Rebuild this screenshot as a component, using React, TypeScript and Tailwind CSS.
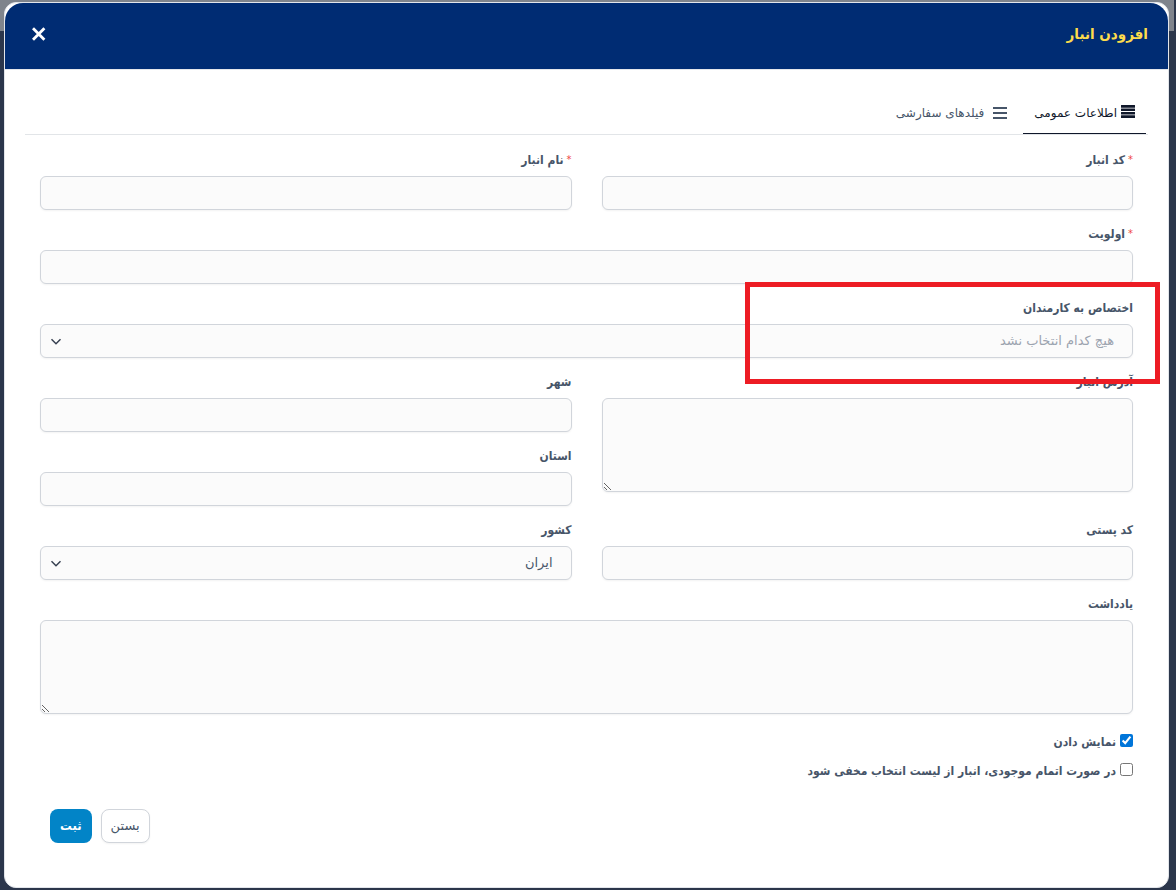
import React, { useState } from "react";

const control =
  "block w-full rounded-md border border-[#d1d5db] bg-[#fbfbfb] px-[18px] text-[13px] text-[#475569] shadow-xs outline-none focus:border-[#0284c7]";

function Label({ id, text, required }: { id: string; text: string; required?: boolean }) {
  return (
    <label
      htmlFor={id}
      className="mb-1.5 flex h-5 items-center gap-[3px] font-['DejaVu_Sans_Condensed','DejaVu_Sans',sans-serif] text-[12px] leading-5 font-bold text-[#475569]"
    >
      {required && <span className="text-[11px] font-normal text-[#ef4444]">*</span>}
      <span>{text}</span>
    </label>
  );
}

function TextField({ id, text, required }: { id: string; text: string; required?: boolean }) {
  return (
    <div>
      <Label id={id} text={text} required={required} />
      <input id={id} type="text" className={control + " h-[34px]"} />
    </div>
  );
}

function AreaField({ id, text }: { id: string; text: string }) {
  return (
    <div>
      <Label id={id} text={text} />
      <textarea id={id} className={control + " h-[94px] resize py-2"} />
    </div>
  );
}

function SelectField({ id, text, value, muted }: { id: string; text: string; value: string; muted?: boolean }) {
  return (
    <div>
      <Label id={id} text={text} />
      <div className="relative">
        <select id={id} className={control + " h-[34px] appearance-none " + (muted ? "text-[#9ca3af]!" : "")}>
          <option>{value}</option>
        </select>
        <svg
          viewBox="0 0 12 8"
          className="pointer-events-none absolute top-[14px] left-[10px] h-2 w-3"
          fill="none"
          stroke="#374151"
          strokeWidth="1.5"
        >
          <path d="M1.5 1.2 L6 5.7 L10.5 1.2" />
        </svg>
      </div>
    </div>
  );
}

function Check({ text, checked }: { text: string; checked?: boolean }) {
  return (
    <label className="flex h-5 items-center gap-1 font-['DejaVu_Sans_Condensed','DejaVu_Sans',sans-serif] text-[12px] font-bold text-[#475569]">
      <input type="checkbox" defaultChecked={checked} className="mb-1 size-[13px] shrink-0 accent-[#0075d9]" />
      <span>{text}</span>
    </label>
  );
}

export default function App() {
  const [tab, setTab] = useState(0);
  return (
    <div
      dir="rtl"
      className="min-h-screen bg-[#2b364b] [background-image:linear-gradient(#7f848c,#7f848c)] [background-size:calc(100%_-_2px)_31px] [background-position:0_0] [background-repeat:no-repeat] pt-0.5 pr-[7px] pb-0.5 pl-1 font-['DejaVu_Sans',sans-serif]"
    >
      <section className="flex min-h-[886px] flex-col rounded-xl border border-[#e2e5ea] bg-white">
        <header className="flex h-[66px] items-center justify-between rounded-t-[18px] bg-[#002c73] px-5 pb-1">
          <h1 className="font-['DejaVu_Sans_Condensed','DejaVu_Sans',sans-serif] text-[15px] font-bold text-[#fddc4c]">
            افزودن انبار
          </h1>
          <button type="button" aria-label="بستن پنجره" className="flex size-7 items-center justify-center">
            <svg viewBox="0 0 14 14" className="size-3.5" stroke="#fff" strokeWidth="2.8" fill="none">
              <path d="M1 1.2 L12.4 12.8 M12.4 1.2 L1 12.8" />
            </svg>
          </button>
        </header>
        <div className="border-t border-[#e5e7eb] px-5 pt-[22px]">
          <nav className="flex h-[43px] border-b border-[#e2e5e8] px-0.5" role="tablist">
            <button
              type="button"
              role="tab"
              aria-selected={tab === 0}
              onClick={() => setTab(0)}
              className={
                "flex items-center gap-1 border-b px-[11px] text-[12px] " +
                (tab === 0 ? "border-[#0f172a] text-[#0f172a]" : "border-transparent text-[#475569]")
              }
            >
              <svg viewBox="0 0 14 13" className="mb-0.5 h-[13px] w-3.5" fill="currentColor">
                <rect width="14" height="2.7" rx="0.3" />
                <rect y="3.5" width="14" height="2.5" rx="0.3" />
                <rect y="7" width="14" height="2.5" rx="0.3" />
                <rect y="10.3" width="14" height="2.7" rx="0.3" />
              </svg>
              <span>اطلاعات عمومی</span>
            </button>
            <button
              type="button"
              role="tab"
              aria-selected={tab === 1}
              onClick={() => setTab(1)}
              className={
                "mr-1 flex items-center gap-[9px] border-b px-3 text-[12px] " +
                (tab === 1 ? "border-[#0f172a] text-[#0f172a]" : "border-transparent text-[#475569]")
              }
            >
              <svg viewBox="0 0 14 12" className="h-3 w-3.5" fill="currentColor">
                <rect width="14" height="2" />
                <rect y="5" width="14" height="2" />
                <rect y="10" width="14" height="2" />
              </svg>
              <span>فیلدهای سفارشی</span>
            </button>
          </nav>
          <form className="px-[15px] pt-[15px]" onSubmit={(e) => e.preventDefault()}>
            <div className="flex flex-col gap-3.5">
              <div className="grid grid-cols-2 gap-[30px]">
                <TextField id="code" text="کد انبار" required />
                <TextField id="name" text="نام انبار" required />
              </div>
              <TextField id="order" text="اولویت" required />
              <div className="relative">
                <SelectField id="staff" text="اختصاص به کارمندان" value="هیچ کدام انتخاب نشد" muted />
                <div className="pointer-events-none absolute -top-4 -right-[27px] z-10 h-[102px] w-[415px] border-[5px] border-[#ed1c24]" />
              </div>
              <div className="grid grid-cols-2 gap-x-[30px]">
                <AreaField id="address" text="آدرس انبار" />
                <div className="flex flex-col gap-3.5">
                  <TextField id="city" text="شهر" />
                  <TextField id="state" text="استان" />
                </div>
              </div>
              <div className="grid grid-cols-2 gap-[30px]">
                <TextField id="zip" text="کد پستی" />
                <SelectField id="country" text="کشور" value="ایران" />
              </div>
              <AreaField id="note" text="یادداشت" />
            </div>
            <div className="mt-[18px] flex flex-col items-start gap-[9px]">
              <Check text="نمایش دادن" checked />
              <Check text="در صورت اتمام موجودی، انبار از لیست انتخاب مخفی شود" />
            </div>
            <div className="mt-7 mb-11 flex justify-end gap-[9px] pl-2.5">
              <button
                type="button"
                className="h-[34px] rounded-lg border border-[#d1d5db] bg-white px-[9px] text-[13px] text-[#475569] shadow-xs"
              >
                بستن
              </button>
              <button
                type="submit"
                className="h-[34px] rounded-lg bg-[#0284c7] px-2.5 font-['DejaVu_Sans_Condensed','DejaVu_Sans',sans-serif] text-[13px] font-bold text-white"
              >
                ثبت
              </button>
            </div>
          </form>
        </div>
      </section>
    </div>
  );
}
